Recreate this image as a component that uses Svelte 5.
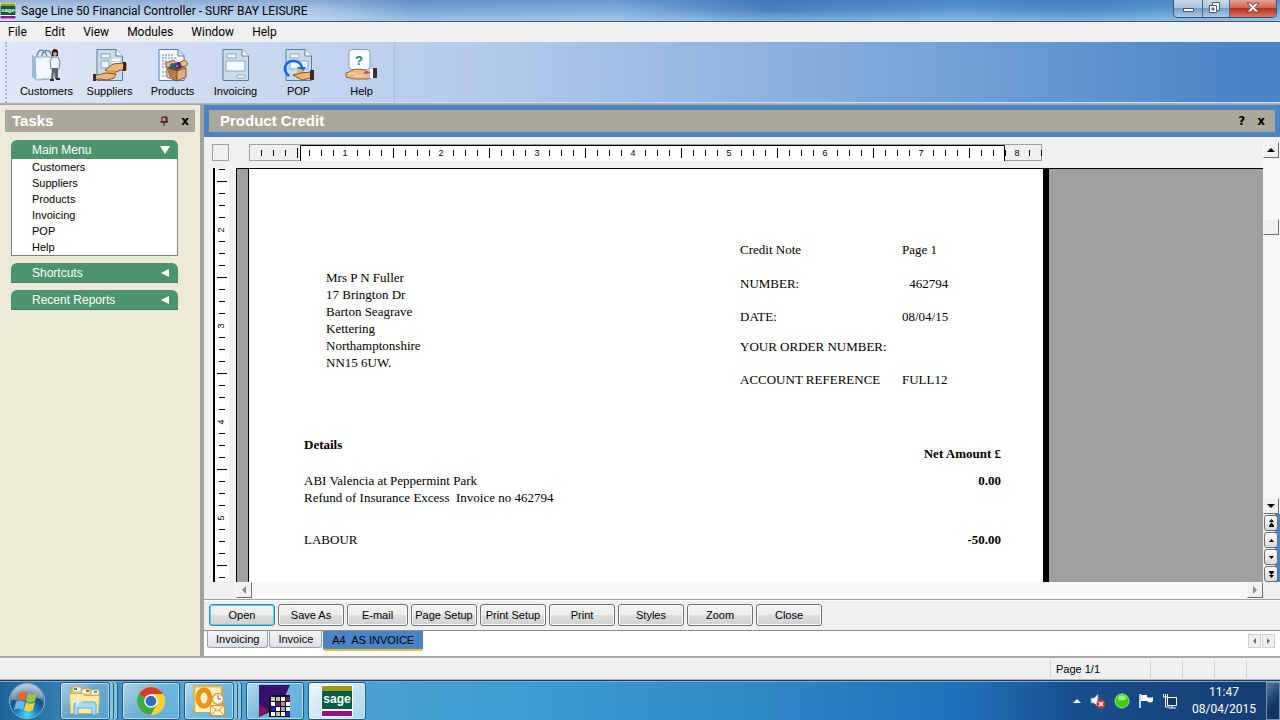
<script lang="ts">
  const menus = ['File', 'Edit', 'View', 'Modules', 'Window', 'Help'];
  const modules = ['Customers', 'Suppliers', 'Products', 'Invoicing', 'POP', 'Help'];
  const closedGroups = ['Shortcuts', 'Recent Reports'];
  const address = [
    'Mrs P N Fuller',
    '17 Brington Dr',
    'Barton Seagrave',
    'Kettering',
    'Northamptonshire',
    'NN15 6UW.'
  ];
  const actions = [
    'Open',
    'Save As',
    'E-mail',
    'Page Setup',
    'Print Setup',
    'Print',
    'Styles',
    'Zoom',
    'Close'
  ];
  const tabs = ['Invoicing', 'Invoice', 'A4  AS INVOICE'];
  const pagers = [
    { label: 'First page', d: 'M5 6h5L7.500 3zM5 10h5L7.500 6zM5 10h5v1H5z' },
    { label: 'Previous page', d: 'M5 9h5L7.500 6z' },
    { label: 'Next page', d: 'M5 6h5L7.500 9z' },
    { label: 'Last page', d: 'M5 4h5v1H5zM5 5h5L7.500 8zM5 8h5L7.500 11z' }
  ];

  // one tick every eighth of an inch
  const across = Array.from({ length: 66 }, (_, i) => i + 1);
  const down = Array.from({ length: 35 }, (_, i) => i);

  let activeTab = $state(2);
  let menuOpen = $state(true);
</script>

{#snippet sheetIcon()}
  <path d="M4 .5h19l6.500 6.500v24.500H4z" fill="#c9dcec" stroke="#587da0" />
  <path d="M23 .5V7h6.500" fill="#fff" stroke="#587da0" />
{/snippet}

{#snippet hand()}
  <path d="M1 24c4-1 7-4 11-4l8 1c2 1 1 3-1 3l5 0 4-3 1 6-6 3H9l-8-2z" fill="#eeb583" stroke="#87502c" stroke-width=".8" />
  <path d="M3 25l8-1M9 27h11" stroke="#fbe0b8" fill="none" />
  <path d="M25 20h3v9h-3z" fill="#fff" />
  <path d="M28 19h4v10h-4z" fill="#3c302e" />
{/snippet}

{#snippet sageLogo()}
  <rect width="32" height="32" fill="#fff" />
  <rect x="1" y="1" width="30" height="5" fill="#9c9a12" />
  <rect x="1" y="6" width="30" height="18" fill="#075e42" />
  <rect x="1" y="26" width="30" height="5" fill="#9a0a92" />
  <text x="16" y="18" text-anchor="middle" class="sage-text">sage</text>
{/snippet}

{#snippet moduleIcon(name: string)}
  <svg class="module-icon" width="34" height="33" viewBox="0 0 34 33" aria-hidden="true">
    {#if name === 'Customers'}
      <path d="M7 9c0-11 9-10 10 0M12 7c1-8 9-7 10 1" fill="none" stroke="#6d86a5" stroke-width="1.5" />
      <path d="M2 6l4 2v23l-4-3z" fill="#9eb7d6" />
      <path d="M5 8h18v22l-17 1z" fill="#f5f9ff" stroke="#91abd0" />
      <path d="M9 9l10-1M8 30l13-1" stroke="#c2d2e8" />
      <path d="M22 3c0-4 6-4 6 0v4h-6z" fill="#251615" />
      <circle cx="25" cy="5" r="2" fill="#dba279" />
      <path d="M22 8h6l2 5-1 7h-8l-1-8z" fill="#edf5fa" stroke="#6c8291" />
      <path d="M22 19h6v11h-3l-1-8-1 9h-2z" fill="#59636b" />
      <path d="M20 31h4M26 30h4" stroke="#352824" stroke-width="2" />
    {:else if name === 'Suppliers'}
      {@render sheetIcon()}
      <path d="M8 5h9v4H8zM8 12h8v7H8z" fill="#edf5fb" stroke="#82a1bd" />
      <path d="M19 11h8M19 14h8" stroke="#fff" stroke-width="2" />
      <path d="M12 21l8-6 10-1h3v7h-5l-8 3-5-1z" fill="#f0b580" stroke="#875127" />
      <path d="M30 13h3v9h-3z" fill="#3b2824" />
      <path d="M14 21h8v6h-8z" fill="#d5a53a" />
      <path d="M1 26h4l7-2 11 1-2 4-7 2-8-1-5 1z" fill="#efb783" stroke="#875127" />
      <path d="M0 25h3v7H0z" fill="#3b2824" />
    {:else if name === 'Products'}
      <path d="M3 .5h19l6 6v25H3z" fill="#f5faff" stroke="#5480a6" />
      <path d="M22 .5V7h6" fill="#dceaff" stroke="#5480a6" />
      <path d="M6 6h12M6 9h15M6 12h5M6 15h5M6 18h4M6 23h4M6 27h4" stroke="#5386c1" stroke-dasharray="2 1" />
      <path d="M11 19l10 3v10l-8-4z" fill="#b67c48" />
      <path d="M21 22l9-4v10l-9 4z" fill="#dfad79" />
      <path d="M11 19l8-5 11 3-9 5z" fill="#69442c" />
      <path d="M11 19l-2-5 9-3 2 4zM20 15l9-4 3 4-3 3z" fill="#e6b887" stroke="#935d34" />
      <path d="M11 19v9l10 4V22zM21 32l9-4v-9l-9 3" fill="none" stroke="#83502e" />
      <circle cx="17" cy="17" r="3" fill="#236a72" />
      <circle cx="22" cy="16" r="3" fill="#59247d" />
      <circle cx="21" cy="17" r="1" fill="#50d070" />
    {:else if name === 'Invoicing'}
      {@render sheetIcon()}
      <path d="M8 5h9v4H8zM7 12h19v10H7zM18 26h8v3h-8z" fill="#f6fbff" stroke="#85a7c1" />
    {:else if name === 'POP'}
      {@render sheetIcon()}
      <path d="M8 5h9v4H8zM8 12h18v8H8z" fill="#eff7fc" stroke="#8baac4" />
      <path d="M7 27C-1 20 4 11 13 12c5 1 7 4 7 8" fill="none" stroke="#1767e8" stroke-width="2.500" />
      <path d="M15 18l9 0-4 6z" fill="#1767e8" />
      <circle cx="18" cy="23" r="3" fill="#edbf46" />
      <path d="M11 26l8-2 10-1v6l-9 2z" fill="#efb47e" stroke="#895131" />
      <path d="M28 21h4v10h-4z" fill="#3b2925" />
    {:else}
      <path d="M7 .5h15q3 0 3 3v14q0 3-3 3h-6l-3 4-2-4H7q-3 0-3-3v-14q0-3 3-3z" fill="#fbfdff" stroke="#87a2bd" />
      <text x="14" y="16" text-anchor="middle" class="bubble-text">?</text>
      <path d="M11 21h8l6 2-5 3z" fill="#c44aa6" />
      {@render hand()}
    {/if}
  </svg>
{/snippet}

{#snippet arrow(direction: string)}
  <svg width="16" height="16" viewBox="0 0 16 16" aria-hidden="true">
    {#if direction === 'up'}
      <path d="M4 10h8L8 6z" />
    {:else if direction === 'down'}
      <path d="M4 6h8l-4 4z" />
    {:else if direction === 'left'}
      <path d="M10 4v8L6 8z" />
    {:else}
      <path d="M6 4v8l4-4z" />
    {/if}
  </svg>
{/snippet}

<div class="screen">
  <header class="title-bar">
    <svg width="16" height="16" viewBox="0 0 32 32" aria-hidden="true">{@render sageLogo()}</svg>
    <h1>Sage Line 50 Financial Controller - SURF BAY LEISURE</h1>
    <div class="window-buttons">
      <button class="minimise" aria-label="Minimise">
        <svg width="28" height="17"><rect x="9.500" y="8.500" width="10" height="3" fill="#fff" stroke="#4d5b70" /></svg>
      </button>
      <button class="restore" aria-label="Restore">
        <svg width="26" height="17">
          <path d="M9.500 2.500h7v8h-7z" fill="#fff" stroke="#4d5b70" />
          <path d="M6.500 5.500h7v7h-7z" fill="#fff" stroke="#4d5b70" />
          <path d="M9 8h2v2H9z" fill="#8ba0ba" stroke="#4d5b70" />
        </svg>
      </button>
      <button class="close" aria-label="Close window">
        <svg width="46" height="17">
          <path d="M17 3h4l2 2.500L25 3h4l-4 4.500 4 4.500h-4l-2-2.500-2 2.500h-4l4-4.500z" fill="#fff" stroke="#5b4450" />
        </svg>
      </button>
    </div>
  </header>

  <nav class="menu-bar" aria-label="Application menu">
    {#each menus as menu}
      <button>{menu}</button>
    {/each}
  </nav>

  <div class="toolbar">
    <div class="modules">
      {#each modules as name}
        <button>
          {@render moduleIcon(name)}
          <span>{name}</span>
        </button>
      {/each}
    </div>
  </div>

  <div class="workspace">
    <aside>
      <header class="pane-header">
        <h2>Tasks</h2>
        <button aria-label="Pin tasks">
          <svg width="10" height="10"><path d="M3 1h5v5H3zM1 6h8M5 6v4M7 1v5" fill="none" stroke="#4b0b0b" /></svg>
        </button>
        <button aria-label="Close tasks">x</button>
      </header>
      <div class="groups">
        <section>
          <button class="group-head" aria-expanded={menuOpen} onclick={() => (menuOpen = !menuOpen)}>
            <span>Main Menu</span>
            <svg width="10" height="10"><path d="M0 1h10L5 9z" fill="#fff" /></svg>
          </button>
          {#if menuOpen}
            <ul>
              {#each modules as name}
                <li><a href="#{name.toLowerCase()}">{name}</a></li>
              {/each}
            </ul>
          {/if}
        </section>
        {#each closedGroups as group}
          <button class="group-head closed" aria-expanded="false">
            <span>{group}</span>
            <svg width="10" height="10"><path d="M9 1v8L1 5z" fill="#fff" /></svg>
          </button>
        {/each}
      </div>
    </aside>

    <main>
      <div class="frame">
        <header class="pane-header">
          <h2>Product Credit</h2>
          <button aria-label="Pane help">?</button>
          <button aria-label="Close pane">x</button>
        </header>
      </div>

      <div class="preview">
        <div class="preview-body">
          <div class="ruler-row">
            <div class="corner"></div>
            <svg class="ruler" width="793" height="17" aria-hidden="true">
              <rect x=".5" y=".5" width="792" height="16" fill="#f0f0f0" stroke="#a0a0a0" />
              <rect x="51" y="1" width="705" height="16" fill="#fff" />
              <path d="M51.500 17V1.500h704V17" fill="none" stroke="#000" />
              {#each across as n}
                {#if n % 8 === 0}
                  <text x={n * 12} y="12" text-anchor="middle">{n / 8}</text>
                {:else}
                  <rect x={n * 12} y={n % 8 === 4 ? 4 : 6} width="1" height={n % 8 === 4 ? 10 : 6} />
                {/if}
              {/each}
            </svg>
          </div>

          <div class="canvas-row">
            <svg class="ruler side" width="16" aria-hidden="true">
              {#each down as n}
                {#if n % 8 === 5}
                  <text transform="translate(9 {n * 12 + 2}) rotate(-90)" text-anchor="middle">{(n + 11) / 8}</text>
                {:else}
                  <rect x={n % 8 === 1 ? 2 : 4} y={n * 12 + 1} width={n % 8 === 1 ? 10 : 6} height="1" />
                {/if}
              {/each}
            </svg>

            <div class="canvas">
              <article class="sheet">
                <div class="letter-head">
                  <address>
                    {#each address as line}
                      <span>{line}</span>
                    {/each}
                  </address>
                  <dl>
                    <dt>Credit Note</dt>
                    <dd>Page 1</dd>
                    <dt>NUMBER:</dt>
                    <dd class="number">462794</dd>
                    <dt>DATE:</dt>
                    <dd>08/04/15</dd>
                    <dt>YOUR ORDER NUMBER:</dt>
                    <dd></dd>
                    <dt>ACCOUNT REFERENCE</dt>
                    <dd>FULL12</dd>
                  </dl>
                </div>
                <table>
                  <thead>
                    <tr><th>Details</th><th class="amount">Net Amount £</th></tr>
                  </thead>
                  <tbody>
                    <tr>
                      <td>ABI Valencia at Peppermint Park<br />Refund of Insurance Excess&nbsp; Invoice no 462794</td>
                      <td class="amount">0.00</td>
                    </tr>
                    <tr class="labour">
                      <td>LABOUR</td>
                      <td class="amount">-50.00</td>
                    </tr>
                  </tbody>
                </table>
              </article>
            </div>
          </div>

          <div class="h-scroll">
            <button class="scroll-button" aria-label="Scroll left">{@render arrow('left')}</button>
            <button class="scroll-button" aria-label="Scroll right">{@render arrow('right')}</button>
          </div>
        </div>

        <div class="v-scroll">
          <button class="scroll-button" aria-label="Scroll up">{@render arrow('up')}</button>
          <div class="track"><div class="thumb"></div></div>
          <button class="scroll-button" aria-label="Scroll down">{@render arrow('down')}</button>
          <div class="pagers">
            {#each pagers as pager}
              <button aria-label={pager.label}>
                <svg width="15" height="14"><path d={pager.d} /></svg>
              </button>
            {/each}
          </div>
        </div>
      </div>

      <div class="actions">
        {#each actions as action, i}
          <button class:default={i === 0} class:short={action === 'E-mail'}>{action}</button>
        {/each}
      </div>

      <div class="tab-row">
        <div class="tabs" role="tablist">
          {#each tabs as tab, i}
            <button role="tab" aria-selected={activeTab === i} class:active={activeTab === i} onclick={() => (activeTab = i)}>{tab}</button>
          {/each}
        </div>
        <div class="tab-scroll">
          <button aria-label="Previous tab"><svg width="11" height="12"><path d="M7 3v6L4 6z" /></svg></button>
          <button aria-label="Next tab"><svg width="11" height="12"><path d="M4 3v6l3-3z" /></svg></button>
        </div>
      </div>
    </main>
  </div>

  <footer class="status-bar">
    <span class="page-count">Page 1/1</span>
    <span></span>
    <span></span>
    <span></span>
    <span></span>
  </footer>

  <footer class="task-bar">
    <button class="start" aria-label="Start">
      <svg width="38" height="38" viewBox="0 0 38 38">
        <defs>
          <radialGradient id="orb" cx=".5" cy=".9" r=".9">
            <stop offset="0" stop-color="#3fe0ff" />
            <stop offset=".35" stop-color="#1b7bb8" />
            <stop offset=".6" stop-color="#174f7f" />
            <stop offset="1" stop-color="#b4cbdc" />
          </radialGradient>
        </defs>
        <circle cx="19" cy="19" r="17.500" fill="url(#orb)" stroke="#8db4cd" />
        <path d="M3 17C4 7 11 3 19 3s15 4 16 14c-11-4-21 5-32 0z" fill="#fff" opacity=".3" />
        <path d="M11 11c3-2 5-2 8 0l-2 8c-3-2-5-2-8 0z" fill="#f0652b" />
        <path d="M20 11c3 2 5 2 9 0l-2 8c-4 2-6 2-9 0z" fill="#98c93c" />
        <path d="M8 20c3-2 5-2 9 0l-2 8c-3-2-5-2-9 0z" fill="#63b9ef" />
        <path d="M18 20c3 2 5 2 9 0l-2 8c-4 2-6 2-9 0z" fill="#fcce3b" />
      </svg>
    </button>

    <button class="app stacked" aria-label="Windows Explorer">
      <svg width="34" height="32" viewBox="0 0 34 32">
        <path d="M3 3h8l2 3h17v22H3z" fill="#eed078" stroke="#c69c45" />
        <path d="M5 2h8v5H5zM14 4h8v5h-8zM23 5h8v5h-8z" fill="#fff" stroke="#d3b35d" />
        <path d="M6 3h3v2H6z" fill="#18a04a" />
        <path d="M18 5h3v2h-3z" fill="#d95432" />
        <path d="M26 6h3v2h-3z" fill="#3a9bd3" />
        <path d="M1.500 8.500h13l2 2h15l-1 18h-28z" fill="#f9e9a8" stroke="#d3b35d" />
        <path d="M6 30V19q0-2 2-2h18q2 0 2 2v11h-4v-7H10v7z" fill="#a8dcf3" stroke="#5ba9d0" />
        <path d="M10 12v9M5 17h9" stroke="#fff" stroke-width="1" />
      </svg>
    </button>
    <button class="app" aria-label="Google Chrome">
      <svg width="30" height="30" viewBox="0 0 30 30">
        <circle cx="15" cy="15" r="14" fill="#fbd232" />
        <path d="M15 15L2.900 8A14 14 0 0 0 15 29l6-10.500z" fill="#45a847" />
        <path d="M15 15L2.900 8a14 14 0 0 1 24.200 0z" fill="#dc3a2b" />
        <path d="M15 8h12.100A14 14 0 0 1 15 29l6-10.500z" fill="#fbd232" />
        <circle cx="15" cy="15" r="6.800" fill="#f3f6f8" />
        <circle cx="15" cy="15" r="5.300" fill="#2e6fc5" />
      </svg>
    </button>
    <button class="app stacked" aria-label="Outlook">
      <svg width="34" height="32" viewBox="0 0 34 32">
        <path d="M2 1h28v26H2z" fill="#fbd773" stroke="#dc9922" />
        <path d="M4 3h24v11l-6 13H4z" fill="#fff2c9" />
        <ellipse cx="12" cy="13" rx="6" ry="8" fill="none" stroke="#ea9419" stroke-width="5" />
        <circle cx="26" cy="14" r="5.500" fill="#fffaf0" stroke="#dba13b" stroke-width="1.500" />
        <path d="M26 10v4h3" fill="none" stroke="#5c6470" />
        <path d="M18.500 20.500h14v10h-14z" fill="#fff3c5" stroke="#d99822" />
        <path d="M19 21l6.500 5 6.500-5M19 30l5-5M32 30l-5-5" fill="none" stroke="#d99822" />
      </svg>
    </button>
    <button class="app" aria-label="Reports">
      <svg width="34" height="32" viewBox="0 0 34 32">
        <path d="M1 0h31l-5 11-10 4-5 12-11 5z" fill="#35106f" />
        <path d="M1 20l11 5-11 7z" fill="#83155e" />
        <path d="M13 10h19v22H11V13z" fill="#111" />
        {#each [0, 1, 2, 3] as row}
          {#each [0, 1, 2, 3] as col}
            <rect
              x={13 + col * 5}
              y={12 + row * 5}
              width="4"
              height="4"
              fill={['#ccc', '#bbb', '#fff', '#76117b', '#fff', '#76117b', '#999', '#fff', '#1420d1', '#fff', '#aaa', '#fff', '#fff', '#bbb', '#fff', '#1420d1'][row * 4 + col]}
            />
          {/each}
        {/each}
      </svg>
    </button>
    <button class="app current" aria-label="Sage">
      <svg width="32" height="32" viewBox="0 0 32 32">{@render sageLogo()}</svg>
    </button>

    <div class="tray">
      <svg width="10" height="16" aria-label="Hidden icons" role="img"><path d="M1 10h8L5 6z" fill="#fff" /></svg>
      <svg width="16" height="16" aria-label="Muted" role="img">
        <path d="M1 5h3l4-4v13l-4-4H1z" fill="#fff" stroke="#6d8bad" />
        <circle cx="11" cy="11" r="4.500" fill="#df2c26" />
        <path d="M9 9l4 4M13 9l-4 4" stroke="#fff" stroke-width="1.500" />
      </svg>
      <svg width="16" height="16" aria-label="Online" role="img">
        <circle cx="8" cy="8" r="7" fill="#42c91e" stroke="#9de783" />
        <ellipse cx="8" cy="5" rx="4" ry="2.500" fill="#9af275" />
      </svg>
      <svg width="16" height="16" aria-label="Action Center" role="img">
        <path d="M2 1v14" stroke="#fff" stroke-width="1.500" />
        <path d="M3 2h6v2c2 1 4 1 6 0v4c-2 2-4 2-6 0H3z" fill="#fff" />
      </svg>
      <svg width="16" height="16" aria-label="Network" role="img">
        <path d="M5.500 4.500h9v8h-9zM7 15h7M10 13v2" fill="#0f3a6c" stroke="#fff" />
        <path d="M1.500 1v3h4V1M3.500 1v3M3.500 4v10h4" fill="none" stroke="#fff" />
      </svg>
    </div>
    <time datetime="2015-04-08T11:47"><span>11:47</span><span>08/04/2015</span></time>
    <button class="show-desktop" aria-label="Show desktop"></button>
  </footer>
</div>

<style>
  :global(body) {
    background: #f0f0f0;
  }

  .screen {
    display: flex;
    flex-direction: column;
    min-height: 100vh;
    font-family: 'Liberation Sans', Arial, sans-serif;
    font-size: 11px;
    color: #000;
  }

  button {
    margin: 0;
    padding: 0;
    border: 0;
    background: none;
    font: inherit;
    color: inherit;
  }

  svg {
    display: block;
    flex: none;
  }

  h1,
  h2,
  ul,
  dl,
  dd {
    margin: 0;
    padding: 0;
  }

  .sage-text {
    font: bold 12px 'Liberation Sans', Arial, sans-serif;
    fill: #fff;
  }

  .bubble-text {
    font: bold 13px 'Liberation Sans', Arial, sans-serif;
    fill: #2c7792;
  }

  .title-bar {
    display: flex;
    align-items: center;
    gap: 5px;
    height: 21px;
    border-bottom: 1px solid #42587a;
    background:
      linear-gradient(180deg, rgba(30, 80, 150, 0.25), rgba(255, 255, 255, 0) 50%, rgba(210, 235, 255, 0.4)),
      linear-gradient(90deg, #bcd3ea, #a9c6e4 25%, #7aa6d6 32%, #82b0df 48%, #4c82c4 60%, #5d98d8 75%, #4d8ccc 84%, #6faade);
  }

  .title-bar h1 {
    flex: 1;
    font: 12px/20px Roboto, sans-serif;
    white-space: nowrap;
  }

  .window-buttons {
    display: flex;
    align-self: flex-start;
    margin-right: 3px;
    border: 1px solid #3d5272;
    border-top: 0;
    border-radius: 0 0 5px 5px;
    overflow: hidden;
    background: linear-gradient(#c8d8e9, #aac3dd 45%, #7b9fc7 50%, #a9cae9);
  }

  .window-buttons button {
    height: 17px;
    border-right: 1px solid #4e6686;
  }

  .window-buttons .close {
    border-right: 0;
    background: linear-gradient(#e7a493, #cf6453 45%, #b7301b 50%, #dc7560);
  }

  .menu-bar {
    display: flex;
    align-items: center;
    gap: 18px;
    height: 20px;
    padding-left: 8px;
    background: #f0f0f0;
    font: 12px/20px Roboto, sans-serif;
  }

  .toolbar {
    display: flex;
    height: 61px;
    padding-left: 5px;
    border-bottom: 1px solid #a3b1c4;
    box-shadow: inset 0 -1px #d3e0ef;
    background: linear-gradient(90deg, #e1e8f8, #c3d4ef 25%, #b1c8e9 40%, #719fd6 76%, #4a84c6 97%);
  }

  .modules {
    display: flex;
    padding: 0 1px 0 8px;
    border-left: 2px dotted #aab6ca;
    border-right: 1px solid #a8bddb;
  }

  .modules button {
    display: flex;
    flex-direction: column;
    align-items: center;
    gap: 2px;
    width: 63px;
    padding-top: 7px;
    line-height: 14px;
  }

  .workspace {
    display: flex;
    flex: 1;
    padding-top: 1px;
    background: #a3a29c;
  }

  aside {
    flex: none;
    width: 190px;
    padding: 5px;
    background: #ece9d8;
  }

  .pane-header {
    display: flex;
    align-items: center;
    gap: 12px;
    height: 22px;
    background: #aca899;
  }

  aside .pane-header {
    padding: 0 6px 0 7px;
  }

  .pane-header h2 {
    flex: 1;
    font-size: 15px;
    line-height: 22px;
    color: #fff;
  }

  .pane-header button {
    font: bold 12px/16px 'DejaVu Sans', sans-serif;
  }

  .groups {
    display: flex;
    flex-direction: column;
    gap: 7px;
    padding: 8px 17px 0 6px;
  }

  .group-head {
    display: flex;
    align-items: center;
    justify-content: space-between;
    width: 100%;
    height: 19px;
    padding: 0 8px 0 21px;
    border-radius: 6px 6px 0 0;
    background: #4c956c;
    color: #fff;
    font-size: 12px;
  }

  .closed {
    height: 20px;
    border-bottom: 1px solid #3f8460;
  }

  ul {
    border: 1px solid #808080;
    border-top: 0;
    background: #fff;
    list-style: none;
  }

  li {
    padding-left: 20px;
    line-height: 16px;
  }

  li a {
    color: #000;
    text-decoration: none;
  }

  main {
    display: flex;
    flex: 1;
    flex-direction: column;
    min-width: 0;
    margin-left: 4px;
    background: #f0f0f0;
  }

  .frame {
    padding: 5px;
    background: #4f84c4;
  }

  .frame .pane-header {
    padding: 0 10px 0 11px;
  }

  .preview {
    display: flex;
    flex: 1;
    min-height: 0;
    border-bottom: 1px solid #a0a0a0;
  }

  .preview-body {
    display: flex;
    flex: 1;
    flex-direction: column;
    min-width: 0;
    overflow: hidden;
  }

  .ruler-row {
    display: flex;
    gap: 20px;
    height: 24px;
    padding: 7px 0 0 8px;
  }

  .corner {
    flex: none;
    width: 15px;
    height: 15px;
    border: 1px solid #a0a0a0;
  }

  .ruler {
    font: 9px 'Liberation Sans', Arial, sans-serif;
  }

  .canvas-row {
    display: flex;
    flex: 1;
    padding-left: 9px;
  }

  .side {
    height: auto;
    align-self: stretch;
    contain: size;
    width: 14px;
    margin-right: 7px;
    border-left: 2px solid #000;
    background: #fff;
  }

  .canvas {
    flex: 1;
    display: flex;
    min-width: 0;
    padding-left: 11px;
    border-top: 1px solid #000;
    border-left: 1px solid #000;
    background: #a0a0a0;
    overflow: hidden;
  }

  .sheet {
    flex: none;
    width: 794px;
    border-left: 1px solid #000;
    border-right: 6px solid #000;
    background: #fff;
    font: 13px/17px 'Liberation Serif', 'Times New Roman', serif;
  }

  .letter-head {
    display: flex;
    padding: 72px 0 0 77px;
  }

  address {
    display: flex;
    flex-direction: column;
    width: 414px;
    padding-top: 28px;
    font-style: normal;
  }

  dl {
    display: grid;
    grid-template-columns: 162px auto;
    grid-template-rows: 34px 33px 30px 33px 17px;
  }

  .number {
    text-align: right;
  }

  table {
    width: 697px;
    margin: 48px 0 0 55px;
    border-collapse: collapse;
  }

  th,
  td {
    padding: 0;
    text-align: left;
    vertical-align: top;
  }

  th {
    height: 26px;
  }

  td {
    padding-top: 10px;
  }

  .labour td {
    padding-top: 25px;
    padding-bottom: 33px;
  }

  .amount {
    text-align: right;
    font-weight: bold;
  }

  th.amount {
    vertical-align: bottom;
  }

  .h-scroll {
    display: flex;
    justify-content: space-between;
    height: 17px;
    margin-left: 32px;
    background: repeating-conic-gradient(#f0f0f0 0 25%, #fff 0 50%) 0 0 / 2px 2px;
  }

  .scroll-button,
  .thumb {
    flex: none;
    width: 16px;
    height: 16px;
    border: 1px solid #f8f8f8;
    border-right-color: #707070;
    border-bottom-color: #707070;
    background: #f0f0f0;
    box-sizing: border-box;
    overflow: hidden;
  }

  .scroll-button svg {
    margin: -1px;
  }

  .h-scroll svg {
    fill: #8c8c8c;
  }

  .v-scroll {
    display: flex;
    flex: none;
    flex-direction: column;
    width: 17px;
    padding: 5px 0 17px;
  }

  .track {
    flex: 1;
    padding-top: 61px;
    background: repeating-conic-gradient(#f0f0f0 0 25%, #fff 0 50%) 0 0 / 2px 2px;
  }

  .pagers {
    display: flex;
    flex-direction: column;
    gap: 1px;
    padding: 1px 0 0 1px;
    background: linear-gradient(90deg, #f0f0f0 12px, #4f84c4 12px);
  }

  .pagers button {
    width: 14px;
    height: 16px;
    border: 1px solid #707070;
    border-radius: 3px;
    background: linear-gradient(#fafafa, #dadada);
    box-sizing: border-box;
  }

  .pagers svg {
    margin-left: -1px;
  }

  .actions {
    display: flex;
    gap: 3px;
    padding: 3px 5px 4px;
    border-top: 1px solid #fff;
    border-bottom: 1px solid #8e8e8e;
  }

  .actions button {
    width: 66px;
    height: 22px;
    border: 1px solid #707070;
    border-radius: 3px;
    box-shadow: inset 0 0 0 1px #fafafa;
    background: linear-gradient(#f4f4f4, #ececec 50%, #dedede 50%, #d0d0d0);
    white-space: nowrap;
  }

  .actions .short {
    width: 61px;
  }

  .actions .default {
    border-color: #2a8dae;
    box-shadow: inset 0 0 0 1px #5fcdf0;
  }

  .tab-row {
    display: flex;
    justify-content: space-between;
    height: 25px;
    background: #fff;
  }

  .tabs {
    display: flex;
    align-items: flex-start;
    padding-left: 3px;
  }

  .tabs button {
    height: 17px;
    margin-right: 1px;
    padding: 0 8px;
    border: 1px solid #9aa0ac;
    border-top: 0;
    border-radius: 0 0 3px 3px;
    background: linear-gradient(#f6f6f6, #dcdfe6);
    white-space: pre;
  }

  .tabs .active {
    height: 20px;
    border-color: #4a7ab8;
    border-bottom: 2px solid #f0b93a;
    background: #4a84c6;
  }

  .tab-scroll {
    display: flex;
    gap: 1px;
    padding: 3px 5px 0 0;
  }

  .tab-scroll button {
    height: 14px;
    border: 1px solid #d0d0d0;
    box-sizing: border-box;
    background: #f0f0f0;
  }

  .tab-scroll svg {
    fill: #707070;
  }

  .status-bar {
    display: flex;
    justify-content: flex-end;
    height: 18px;
    padding: 2px 2px 1px 0;
    border-top: 2px solid #a8a8a8;
    border-bottom: 1px solid #a8b4c0;
    background: #f0f0f0;
    line-height: 18px;
  }

  .status-bar span {
    width: 31px;
    border-left: 1px solid #d2d2d2;
  }

  .status-bar .page-count {
    width: 94px;
    padding-left: 5px;
  }

  .task-bar {
    display: flex;
    align-items: center;
    height: 39px;
    border-top: 1px solid #1b3b5e;
    box-shadow: inset 0 1px #78aeda;
    background: linear-gradient(90deg, #1d6294, #3580b4 5%, #55a6d4 15%, #409cd2 40%, #2f86c5 60%, #2071b9 75%, #184f8e 84%, #153c6e);
  }

  .start {
    width: 52px;
    margin-right: 8px;
    padding-left: 8px;
  }

  .app {
    display: flex;
    align-items: center;
    justify-content: center;
    width: 58px;
    height: 38px;
    margin-right: 4px;
    border: 1px solid #1e5d83;
    border-radius: 3px;
    box-shadow: inset 0 0 0 1px rgba(255, 255, 255, 0.5);
    background: linear-gradient(135deg, rgba(255, 255, 255, 0.6), rgba(160, 215, 240, 0.4) 50%, rgba(120, 200, 235, 0.4));
  }

  .stacked {
    width: 50px;
    margin-right: 12px;
    box-shadow:
      inset 0 0 0 1px rgba(255, 255, 255, 0.5),
      3px 0 #8cc4e0,
      4px 0 #1e5d83,
      7px 0 #8cc4e0,
      8px 0 #1e5d83;
  }

  .current {
    background: linear-gradient(135deg, rgba(255, 255, 255, 0.9), rgba(190, 228, 245, 0.8));
  }

  .tray {
    display: flex;
    align-items: center;
    gap: 8px;
    margin-left: auto;
  }

  time {
    display: flex;
    flex-direction: column;
    width: 84px;
    margin-left: 4px;
    color: #fff;
    font: 12px/17px Roboto, sans-serif;
    text-align: center;
  }

  .show-desktop {
    width: 14px;
    height: 38px;
    border: 1px solid #7391b2;
    background: linear-gradient(135deg, #54789f, #12345f 60%);
  }
</style>
